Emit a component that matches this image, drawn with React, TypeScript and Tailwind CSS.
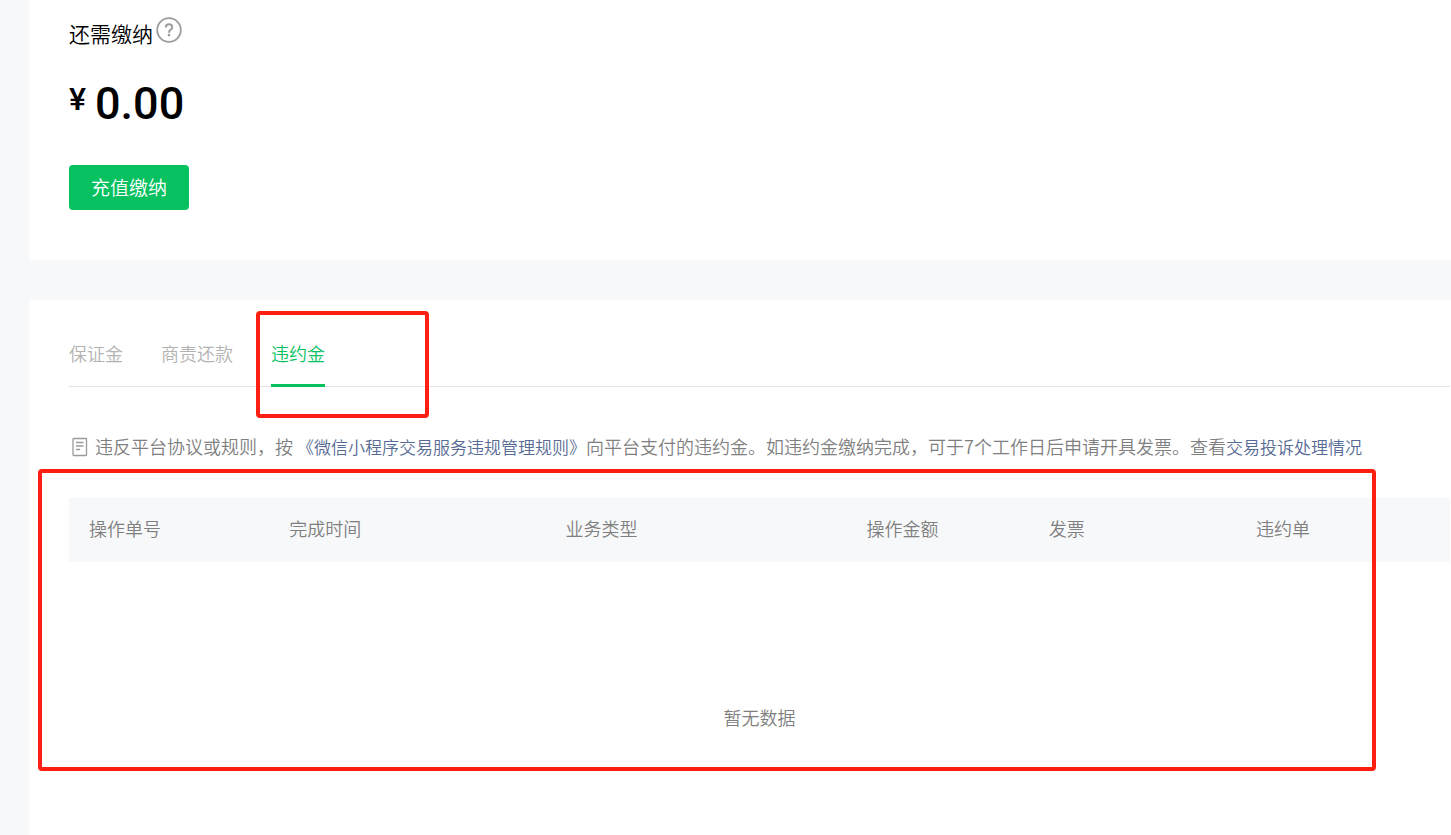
import { useState } from "react";

const tabs = ["保证金", "商责还款", "违约金"];

const columns = [
  { label: "操作单号", width: "w-[14.5%]" },
  { label: "完成时间", width: "w-[20%]" },
  { label: "业务类型", width: "w-[21.8%]" },
  { label: "操作金额", width: "w-[13.2%]" },
  { label: "发票", width: "w-[15%]" },
  { label: "违约单", width: "w-[15.5%]" },
];

function HelpIcon() {
  return (
    <svg viewBox="0 0 26 26" className="size-[26px]" fill="none" stroke="#9c9c9c" aria-hidden="true">
      <circle cx="13" cy="13" r="11.8" strokeWidth="1.8" />
      <path d="M9.8 10.4c0-1.9 1.3-3.1 3.2-3.1s3.2 1.2 3.2 2.9c0 1.3-.7 2-1.7 2.7-1 .7-1.5 1.2-1.5 2.4v.4" strokeWidth="2" />
      <circle cx="13" cy="18.1" r="1.3" fill="#9c9c9c" stroke="none" />
    </svg>
  );
}

function DocIcon() {
  return (
    <svg viewBox="0 0 16 20" className="h-5 w-4 shrink-0" fill="none" stroke="#9a9a9a" aria-hidden="true">
      <rect x="1" y="1.5" width="13.5" height="17" rx="0.8" strokeWidth="1.3" />
      <path d="M4 5.5h7.5M4 9h7.5M4 12.5h4" strokeWidth="1.4" />
    </svg>
  );
}

function Highlight({ className }: { className: string }) {
  return <div aria-hidden="true" className={`pointer-events-none absolute rounded-sm border-4 border-[#ff1e12] ${className}`} />;
}

export default function App() {
  const [active, setActive] = useState("违约金");

  return (
    <div className="flex min-h-screen bg-[#f7f8fa] pl-[29px] font-['Noto_Sans_CJK_SC',sans-serif] text-[18px] leading-7 font-[350] text-[#7f7f7f]">
      <main className="flex min-w-0 flex-1 flex-col gap-10">
        <section className="bg-white px-10 pt-4 pb-[50px]">
          <div className="flex items-start">
            <h2 className="pt-[3px] text-[21px] leading-7 font-[350] text-black">还需缴纳</h2>
            <button type="button" aria-label="说明" className="ml-[3px] pt-px">
              <HelpIcon />
            </button>
          </div>
          <p className="mt-[29px] flex h-14 items-start gap-[9px] font-['Roboto',sans-serif] font-medium text-black">
            <span className="pt-[3px] text-[32px] leading-10">¥</span>
            <span className="text-[45px] leading-14">0.00</span>
          </p>
          <button type="button" className="mt-[33px] h-[45px] w-[120px] rounded bg-[#07c160] pb-0.5 text-[19px] text-white">
            充值缴纳
          </button>
        </section>

        <section className="flex-1 bg-white pr-px pl-10">
          <div role="tablist" className="relative flex h-[87px] items-end gap-[38px] border-b border-[#e2e2e2]">
            {tabs.map((tab) => (
              <button
                key={tab}
                type="button"
                role="tab"
                aria-selected={tab === active}
                onClick={() => setActive(tab)}
                className={
                  tab === active
                    ? "-mb-px border-b-[3px] border-[#07c160] pb-[17px] text-[#07c160]"
                    : "-mb-px border-b-[3px] border-transparent pb-[17px] text-[#b2b2b2]"
                }
              >
                {tab}
              </button>
            ))}
            <Highlight className="top-[11px] left-[187px] h-[107px] w-[173px]" />
          </div>

          <div className="mt-[45px] flex items-center gap-[7px] pl-[3px] whitespace-nowrap">
            <DocIcon />
            <p>
              违反平台协议或规则，按{" "}
              <a href="#rules" className="text-[17px] text-[#576b95]">《微信小程序交易服务违规管理规则》</a>
              向平台支付的违约金。如违约金缴纳完成，可于7个工作日后申请开具发票。查看
              <a href="#complaints" className="text-[17px] text-[#576b95]">交易投诉处理情况</a>
            </p>
          </div>

          <div className="relative mt-[37px]">
            <table className="w-full table-fixed border-collapse">
              <thead className="bg-[#f7f8fa]">
                <tr>
                  {columns.map((column) => (
                    <th key={column.label} scope="col" className={`h-16 px-5 pb-1 text-left font-[350] ${column.width}`}>
                      {column.label}
                    </th>
                  ))}
                </tr>
              </thead>
              <tbody>
                <tr>
                  <td colSpan={6} className="pt-[141px] pb-[50px] text-center">
                    暂无数据
                  </td>
                </tr>
              </tbody>
            </table>
            <Highlight className="-top-[29px] right-[74px] -left-[31px] h-[302px]" />
          </div>
        </section>
      </main>
    </div>
  );
}
